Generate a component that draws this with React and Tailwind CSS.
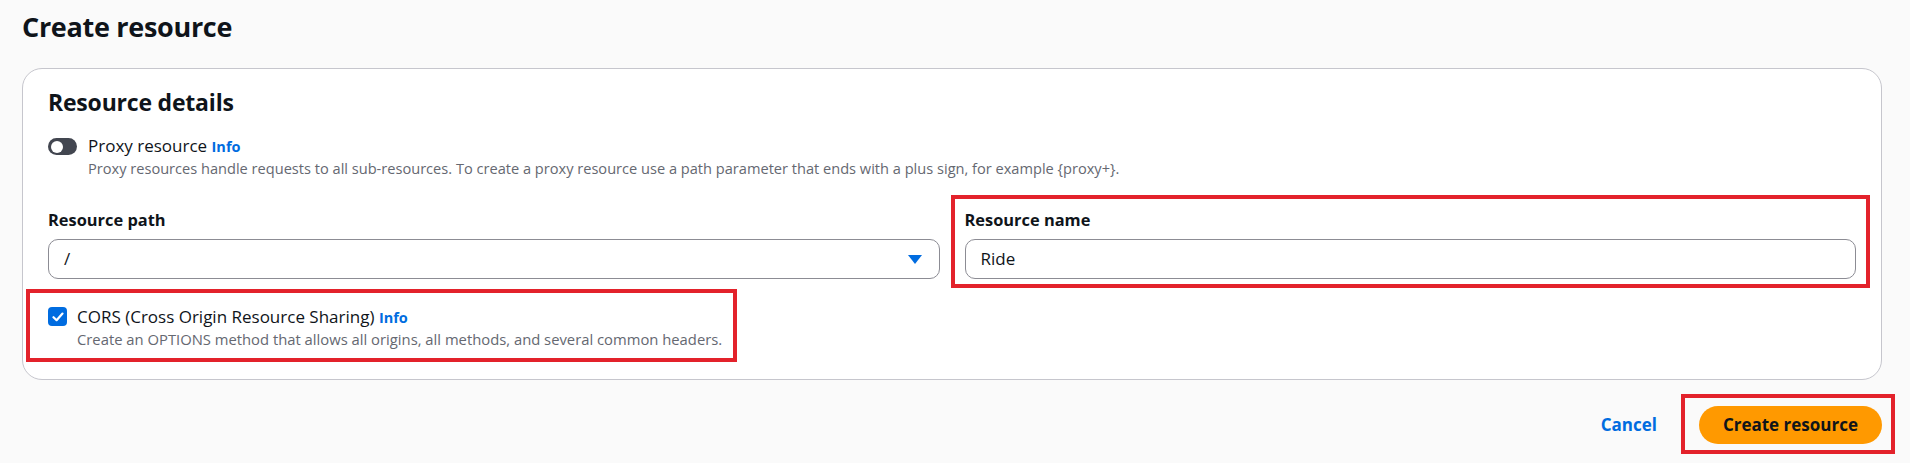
import React from "react";

const font = { fontFamily: '"Open Sans", "Noto Sans", Arial, sans-serif' };

function RedBox({ className }) {
  return (
    <div
      className={`pointer-events-none absolute border-[4px] border-[#e3222b] ${className}`}
    />
  );
}

export default function App() {
  return (
    <div
      className="h-[463px] w-full overflow-hidden bg-[#fafafa] pl-[22px] pr-[28px] text-[#0f141a]"
      style={font}
    >
      <h1 className="pt-[8px] text-[27px] font-bold leading-[38px] tracking-[-0.3px]">
        Create resource
      </h1>

      <div className="mt-[22px] rounded-[20px] border border-[#c6c6cd] bg-white px-[25px] pb-[30px] pt-[18px]">
        <h2 className="text-[23px] font-bold leading-[30px] tracking-[-0.2px]">
          Resource details
        </h2>

        <div className="mt-[18px] flex items-start gap-[11px]">
          <div className="mt-[3px] flex h-[17px] w-[29px] shrink-0 items-center rounded-full bg-[#424650] pl-[3px]">
            <div className="h-[12px] w-[12px] rounded-full bg-white" />
          </div>
          <div>
            <div className="text-[17px] leading-[22px]">
              Proxy resource{" "}
              <span className="text-[14.5px] font-bold text-[#006ce0]">Info</span>
            </div>
            <div className="text-[14.6px] leading-[20px] text-[#656871]">
              Proxy resources handle requests to all sub-resources. To create a proxy resource use a path parameter that ends with a plus sign, for example {"{proxy+}"}.
            </div>
          </div>
        </div>

        <div className="mt-[31px] grid grid-cols-2 gap-x-[25px]">
          <div>
            <div className="text-[16.4px] font-bold leading-[22px]">Resource path</div>
            <div className="mt-[8px] flex h-[40px] items-center justify-between rounded-[10px] border border-[#8c8c94] bg-white pl-[15px] pr-[17px]">
              <span className="text-[17px]">/</span>
              <svg width="14" height="9" viewBox="0 0 14 9">
                <path d="M0 0 L14 0 L7 9 Z" fill="#006ce0" />
              </svg>
            </div>
            <div className="relative mt-[27px] flex w-fit items-start gap-[10px]">
              <RedBox className="-bottom-[13px] -left-[22px] -right-[15px] -top-[17px]" />
              <div className="mt-[1px] flex h-[19px] w-[19px] shrink-0 items-center justify-center rounded-[4px] bg-[#006ce0]">
                <svg width="12" height="10" viewBox="0 0 12 10">
                  <path
                    d="M1.5 5.2 L4.6 8.2 L10.5 1.6"
                    fill="none"
                    stroke="white"
                    strokeWidth="2.2"
                    strokeLinecap="round"
                    strokeLinejoin="round"
                  />
                </svg>
              </div>
              <div>
                <div className="text-[17px] leading-[22px]">
                  CORS (Cross Origin Resource Sharing){" "}
                  <span className="text-[14.5px] font-bold text-[#006ce0]">Info</span>
                </div>
                <div className="text-[14.8px] leading-[20px] text-[#656871]">
                  Create an OPTIONS method that allows all origins, all methods, and several common headers.
                </div>
              </div>
            </div>
          </div>

          <div className="relative self-start">
            <RedBox className="-bottom-[9px] -left-[14px] -right-[14px] -top-[14px]" />
            <div className="text-[16.4px] font-bold leading-[22px]">Resource name</div>
            <div className="mt-[8px] flex h-[40px] items-center rounded-[10px] border border-[#8c8c94] bg-white px-[15px]">
              <span className="text-[17px]">Ride</span>
            </div>
          </div>
        </div>
      </div>

      <div className="mt-[26px] flex items-center justify-end gap-[42px]">
        <button className="text-[17px] font-bold text-[#006ce0]">Cancel</button>
        <div className="relative">
          <RedBox className="-bottom-[10px] -left-[18px] -right-[13px] -top-[12px]" />
          <button className="h-[38px] rounded-full bg-[#ff9900] px-[24px] text-[17px] font-bold text-[#0f141a]">
            Create resource
          </button>
        </div>
      </div>
    </div>
  );
}
